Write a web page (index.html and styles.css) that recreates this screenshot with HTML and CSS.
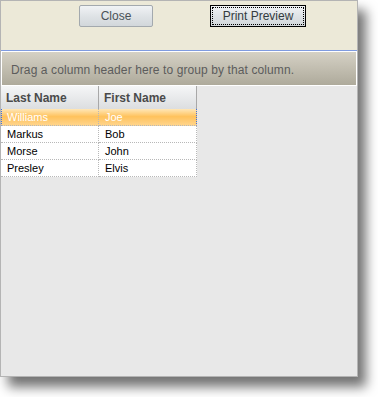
FILE: index.html
```html
<!DOCTYPE html>
<html lang="en">

<head>
    <meta charset="UTF-8">
    <meta name="viewport" content="width=device-width, initial-scale=1.0">
    <title>Grid Print Preview</title>
    <link rel="stylesheet" href="styles.css">
</head>

<body>
    <div class="window">
        <div class="toolbar">
            <button class="btn">Close</button>
            <button class="btn btn-focus"><span>Print Preview</span></button>
        </div>
        <div class="group-panel">Drag a column header here to group by that column.</div>
        <div class="grid">
            <div class="row header">
                <div class="cell">Last Name</div>
                <div class="cell">First Name</div>
            </div>
            <div class="row selected">
                <div class="cell">Williams</div>
                <div class="cell">Joe</div>
            </div>
            <div class="row">
                <div class="cell">Markus</div>
                <div class="cell">Bob</div>
            </div>
            <div class="row">
                <div class="cell">Morse</div>
                <div class="cell">John</div>
            </div>
            <div class="row">
                <div class="cell">Presley</div>
                <div class="cell">Elvis</div>
            </div>
        </div>
    </div>
</body>

</html>
```

FILE: styles.css
```css
/* Basic Reset */
body {
    margin: 0;
    padding: 0;
    min-height: 397px;
    background: #ffffff;
    font-family: 'Liberation Sans', Arial, sans-serif;
}

/* Window */
.window {
    width: 356px;
    height: 375px;
    border: 1px solid #b4b4b4;
    background: #e8e8e8;
    box-shadow: 8px 10px 11px rgba(0, 0, 0, 0.55);
}

/* Toolbar */
.toolbar {
    height: 45px;
    padding-top: 4px;
    background: #ece9d8;
    border-bottom: 1px solid #7f9be0;
    display: flex;
    align-items: flex-start;
}

.btn {
    height: 22px;
    margin: 0;
    padding: 0;
    border: 1px solid #a3a9ae;
    border-radius: 2px;
    background: linear-gradient(#f1f3f5, #dfe3e6 50%, #d2d7db);
    color: #4a5258;
    font-family: 'Liberation Sans', Arial, sans-serif;
    font-size: 12px;
}

.btn:first-child {
    width: 74px;
    margin-left: 78px;
}

.btn-focus {
    width: 96px;
    margin-left: 57px;
    border: 1px solid #000000;
    border-radius: 0;
    padding: 1px;
    color: #333b40;
}

.btn-focus span {
    display: block;
    height: 16px;
    line-height: 16px;
    border: 1px dotted #000000;
}

/* Group panel */
.group-panel {
    height: 33px;
    border: 1px solid #ffffff;
    background: linear-gradient(#d5d1c5, #aeaa9b);
    color: #5c5c5c;
    font-size: 12px;
    letter-spacing: 0.1px;
    line-height: 36px;
    padding-left: 9px;
}

/* Grid */
.grid {
    width: 196px;
}

.row {
    display: grid;
    grid-template-columns: 98px 98px;
    height: 17px;
    background: #ffffff;
    font-size: 11px;
    color: #000000;
}

.cell {
    padding-left: 6px;
    line-height: 16px;
    border-right: 1px dotted #b8b8b8;
    border-bottom: 1px dotted #b8b8b8;
}

.header {
    height: 23px;
    background: linear-gradient(#f5f6f7, #dcdee0);
    font-size: 12px;
    font-weight: bold;
    color: #4a4a4a;
}

.header .cell {
    line-height: 24px;
    padding-left: 5px;
    border-right: 1px solid #a8a8a8;
    border-bottom: none;
}

.selected {
    background: linear-gradient(#ffe7b8, #ffc25c 45%, #ffd690);
    color: #ffffff;
}

.selected .cell:first-child {
    border-left: 1px dotted #3f6ee0;
    padding-left: 5px;
}

.selected .cell:last-child {
    border-right: 1px dotted #3f6ee0;
}
```
